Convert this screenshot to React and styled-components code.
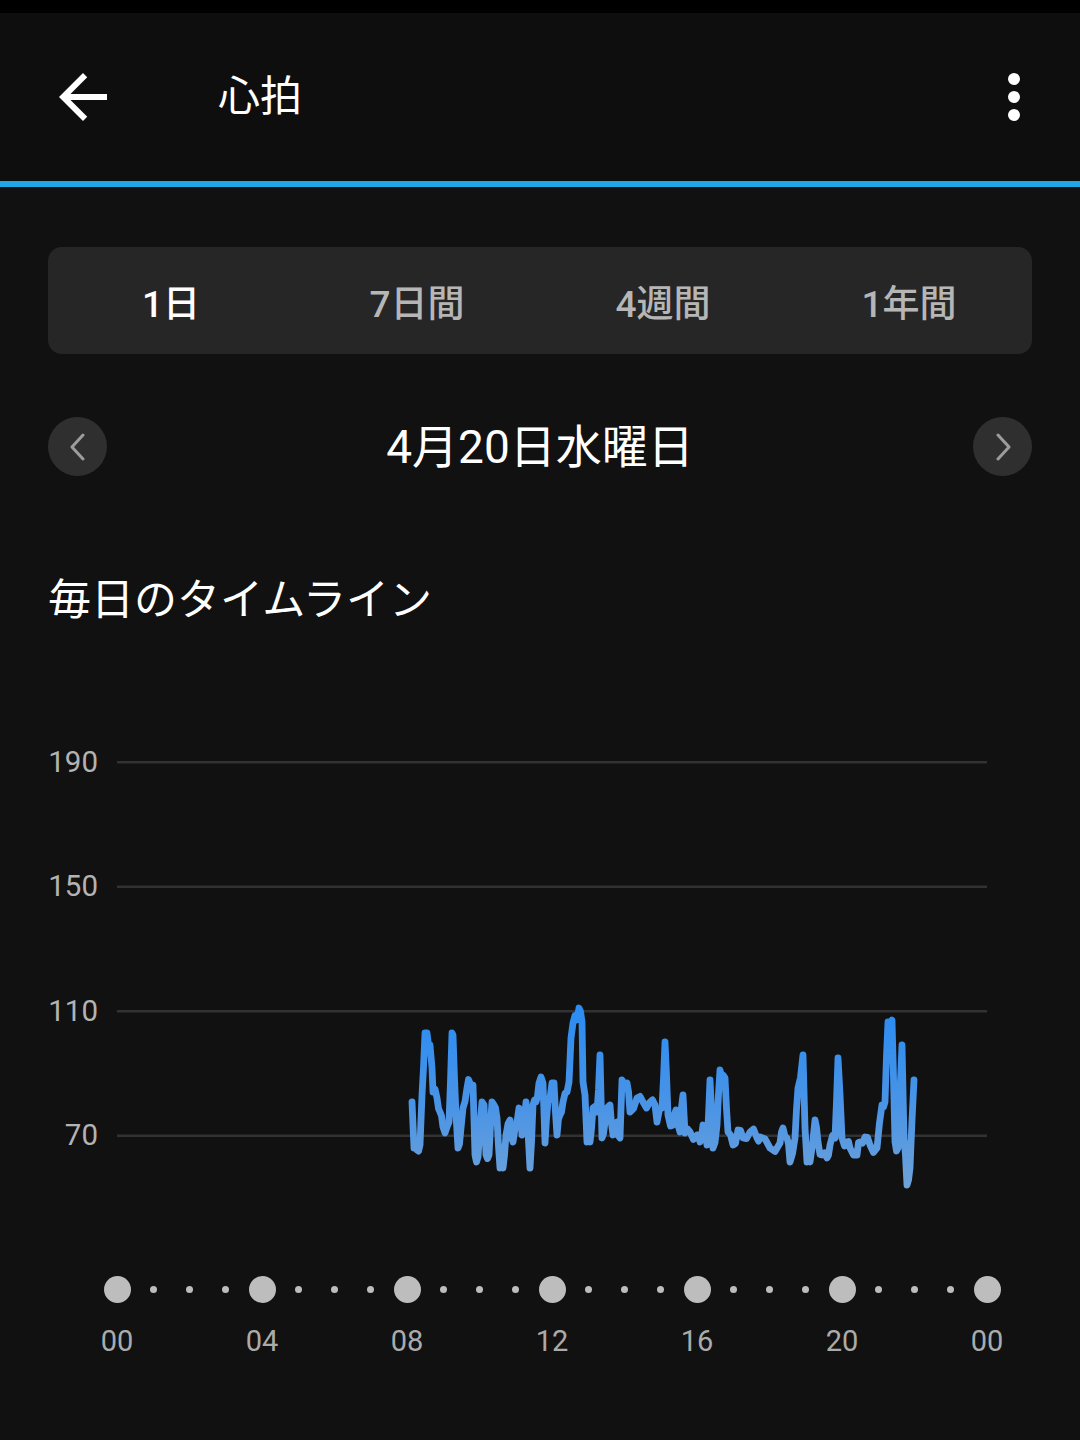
import React from "react";
import styled, { createGlobalStyle } from "styled-components";

const GlobalStyle = createGlobalStyle`
  html, body { margin: 0; padding: 0; background: #111111; }
  body { font-family: Roboto, "Noto Sans CJK JP", sans-serif; color: #fff; }
  * { box-sizing: border-box; }
`;

const Screen = styled.div`
  width: 1080px;
  min-height: 1440px;
  background: #111111;
  display: flex;
  flex-direction: column;
`;

const StatusBar = styled.div`
  height: 13px;
  background: #000;
`;

const TopBar = styled.header`
  height: 168px;
  background: #0e0e0e;
  display: flex;
  align-items: center;
  padding: 0 30px 0 47px;
`;

const IconButton = styled.div`
  display: flex;
  align-items: center;
  justify-content: center;
  width: ${(p) => p.$size}px;
  height: ${(p) => p.$size}px;
`;

const Title = styled.h1`
  margin: 0 0 0 99px;
  flex: 1;
  font-size: 42px;
  font-weight: 400;
  line-height: 1;
  color: #fff;
`;

const AccentLine = styled.div`
  height: 6px;
  background: #1fa6e6;
`;

const Content = styled.main`
  padding: 60px 48px 0;
  display: flex;
  flex-direction: column;
`;

const Tabs = styled.div`
  height: 107px;
  background: #262626;
  border-radius: 14px;
  display: grid;
  grid-template-columns: repeat(4, 1fr);
`;

const Tab = styled.div`
  display: flex;
  align-items: center;
  justify-content: center;
  font-size: 37px;
  font-weight: 500;
  color: ${(p) => (p.$active ? "#ffffff" : "#b6b6b6")};
`;

const DateRow = styled.div`
  margin-top: 63px;
  height: 59px;
  display: flex;
  align-items: center;
  justify-content: space-between;
`;

const NavButton = styled.div`
  width: 59px;
  height: 59px;
  border-radius: 50%;
  background: #2f2f2f;
  display: flex;
  align-items: center;
  justify-content: center;
`;

const DateText = styled.div`
  font-size: 46px;
  font-weight: 400;
  line-height: 1;
  color: #fff;
`;

const SectionTitle = styled.h2`
  margin: 99px 0 0 0;
  font-size: 43px;
  font-weight: 400;
  line-height: 50px;
  color: #fff;
`;

const Chart = styled.div`
  margin-top: 75px;
  display: flex;
`;

const YAxis = styled.div`
  width: 69px;
  flex-shrink: 0;
  display: flex;
  flex-direction: column;
`;

const YLabel = styled.div`
  height: 124.5px;
  display: flex;
  align-items: center;
  justify-content: flex-end;
  padding-right: 19px;
  font-size: 29.5px;
  line-height: 1;
  color: #b3b3b3;
`;

const TimeDots = styled.div`
  margin: 77.5px 0 0 50.875px;
  height: 27px;
  display: flex;
  align-items: center;
`;

const DotCell = styled.div`
  width: 36.25px;
  flex-shrink: 0;
  display: flex;
  justify-content: center;
  align-items: center;
`;

const Dot = styled.div`
  width: ${(p) => (p.$major ? 27 : 7)}px;
  height: ${(p) => (p.$major ? 27 : 7)}px;
  border-radius: 50%;
  background: #bdbdbd;
`;

const TimeLabels = styled.div`
  margin: 24.5px 0 0 -3.5px;
  display: flex;
`;

const TimeLabel = styled.div`
  width: 145px;
  flex-shrink: 0;
  text-align: center;
  font-size: 29px;
  line-height: 28px;
  color: #ababab;
`;

const BackIcon = () => (
  <svg width="72" height="72" viewBox="0 0 24 24">
    <path
      fill="#fff"
      d="M20 11H7.83l5.59-5.59L12 4l-8 8 8 8 1.41-1.41L7.83 13H20v-2z"
    />
  </svg>
);

const MoreIcon = () => (
  <svg width="72" height="72" viewBox="0 0 24 24">
    <circle cx="12" cy="6" r="2" fill="#fff" />
    <circle cx="12" cy="12" r="2" fill="#fff" />
    <circle cx="12" cy="18" r="2" fill="#fff" />
  </svg>
);

const Chevron = ({ dir }) => (
  <svg width="18" height="28" viewBox="0 0 18 28">
    <polyline
      points={dir === "left" ? "14,2 3,14 14,26" : "4,2 15,14 4,26"}
      fill="none"
      stroke="#9c9c9c"
      strokeWidth="3"
      strokeLinecap="round"
      strokeLinejoin="round"
    />
  </svg>
);

const DATA = [
  [412, 1102], [414, 1148], [417, 1150], [420, 1145], [422, 1095], [425, 1033],
  [427, 1033], [430, 1045], [432, 1068], [433, 1092], [437, 1098], [440, 1112],
  [443, 1127], [447, 1127], [449, 1122], [452, 1033], [453, 1035], [456, 1115],
  [458, 1148], [461, 1128], [463, 1108], [467, 1088], [470, 1083], [473, 1085],
  [475, 1155], [478, 1157], [482, 1102], [484, 1105], [486, 1155], [489, 1155],
  [492, 1102], [494, 1105], [497, 1118], [500, 1168], [503, 1168], [506, 1135],
  [510, 1120], [513, 1142], [517, 1122], [519, 1108], [522, 1135], [526, 1102],
  [530, 1168], [533, 1105], [536, 1102], [539, 1083], [543, 1083], [545, 1143],
  [548, 1102], [552, 1083], [554, 1083], [557, 1135], [560, 1115], [563, 1102],
  [567, 1092], [569, 1082], [571, 1038], [573, 1023], [577, 1020], [579, 1008],
  [582, 1022], [583, 1082], [585, 1095], [587, 1142], [590, 1142], [593, 1108],
  [597, 1112], [600, 1055], [602, 1138], [605, 1122], [610, 1105], [613, 1135],
  [617, 1122], [620, 1138], [622, 1080], [627, 1083], [630, 1112], [637, 1098],
  [643, 1102], [650, 1102], [655, 1105], [657, 1122], [662, 1108], [665, 1042],
  [668, 1115], [673, 1125], [676, 1110], [680, 1132], [683, 1095], [685, 1133],
  [690, 1132], [697, 1135], [700, 1142], [703, 1125], [707, 1145], [710, 1080],
  [713, 1148], [717, 1125], [720, 1070], [723, 1075], [725, 1078], [728, 1132],
  [733, 1145], [738, 1130], [743, 1138], [750, 1132], [757, 1138], [760, 1137],
  [770, 1148], [780, 1143], [783, 1128], [787, 1138], [790, 1162], [795, 1138],
  [798, 1088], [803, 1055], [805, 1128], [807, 1162], [810, 1162], [815, 1120],
  [818, 1142], [822, 1155], [827, 1158], [830, 1145], [835, 1138], [838, 1058],
  [842, 1138], [847, 1142], [850, 1148], [857, 1155], [860, 1142], [865, 1137],
  [870, 1145], [877, 1148], [882, 1105], [885, 1102], [888, 1022], [892, 1020],
  [895, 1142], [898, 1148], [902, 1045], [904, 1138], [907, 1185], [910, 1168],
  [914, 1080],
];

// densify with small deterministic jitter, like the sampled signal
const densify = (pts) => {
  const out = [];
  for (let i = 0; i < pts.length; i++) {
    const [x, y] = pts[i];
    out.push([x, y]);
    const next = pts[i + 1];
    if (next && next[0] - x >= 3) {
      const mx = (x + next[0]) / 2;
      const my = (y + next[1]) / 2 + (i % 2 === 0 ? 6 : -6) * (i % 3 === 0 ? 1 : 0.6);
      out.push([mx, my]);
    }
  }
  return out;
};

const LINE = densify(DATA)
  .map(([x, y]) => `${x},${y.toFixed(1)}`)
  .join(" ");

const GRID_Y = [762.25, 886.75, 1011.25, 1135.75];

const Plot = () => (
  <svg width="870" height="498" viewBox="117 700 870 498">
    <defs>
      <linearGradient id="hr" gradientUnits="userSpaceOnUse" x1="0" y1="1005" x2="0" y2="1190">
        <stop offset="0" stopColor="#2a8cf2" />
        <stop offset="0.55" stopColor="#4a94e6" />
        <stop offset="1" stopColor="#6fa2d8" />
      </linearGradient>
    </defs>
    {GRID_Y.map((y) => (
      <line key={y} x1="117" x2="987" y1={y} y2={y} stroke="#323232" strokeWidth="2.5" />
    ))}
    <polyline
      points={LINE}
      fill="none"
      stroke="url(#hr)"
      strokeWidth="6.8"
      strokeLinejoin="round"
      strokeLinecap="round"
    />
  </svg>
);

const TABS = ["1日", "7日間", "4週間", "1年間"];
const Y_LABELS = ["190", "150", "110", "70"];
const HOURS = ["00", "04", "08", "12", "16", "20", "00"];

export default function App() {
  return (
    <Screen>
      <GlobalStyle />
      <StatusBar />
      <TopBar>
        <IconButton $size={72}>
          <BackIcon />
        </IconButton>
        <Title>心拍</Title>
        <IconButton $size={72}>
          <MoreIcon />
        </IconButton>
      </TopBar>
      <AccentLine />
      <Content>
        <Tabs>
          {TABS.map((t, i) => (
            <Tab key={t} $active={i === 0}>
              {t}
            </Tab>
          ))}
        </Tabs>
        <DateRow>
          <NavButton>
            <Chevron dir="left" />
          </NavButton>
          <DateText>4月20日水曜日</DateText>
          <NavButton>
            <Chevron dir="right" />
          </NavButton>
        </DateRow>
        <SectionTitle>毎日のタイムライン</SectionTitle>
        <Chart>
          <YAxis>
            {Y_LABELS.map((l) => (
              <YLabel key={l}>{l}</YLabel>
            ))}
          </YAxis>
          <Plot />
        </Chart>
        <TimeDots>
          {Array.from({ length: 25 }, (_, i) => (
            <DotCell key={i}>
              <Dot $major={i % 4 === 0} />
            </DotCell>
          ))}
        </TimeDots>
        <TimeLabels>
          {HOURS.map((h, i) => (
            <TimeLabel key={i}>{h}</TimeLabel>
          ))}
        </TimeLabels>
      </Content>
    </Screen>
  );
}
